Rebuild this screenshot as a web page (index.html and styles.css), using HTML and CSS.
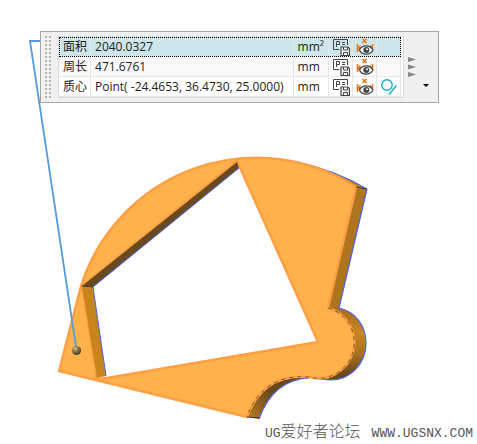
FILE: index.html
```html
<!DOCTYPE html>
<html lang="zh-CN">
<head>
<meta charset="utf-8">
<title>面积测量</title>
<link rel="stylesheet" href="styles.css">
</head>
<body>
<svg class="defs" aria-hidden="true">
  <symbol id="save-parameter" viewBox="0 0 18 18">
    <path d="M7 11.500H1.500V1.500H15.500V7" fill="none" stroke="#464646"/>
    <path d="M4.500 9V3.500H7.500V6.500H4.500M10 4.500H13M10 6.500H13" fill="none" stroke="#464646"/>
    <path d="M9 9H16L17.500 10.500V17.500H9Z" fill="#f5f7f7" stroke="#464646" stroke-width="1.200"/>
    <path d="M11.500 9V12H15.500V9M11.500 17V14.500H15.500V17" fill="none" stroke="#464646"/>
  </symbol>
  <symbol id="show-dimension" viewBox="0 0 18 18">
    <path d="M6.500 1L10.500 5M10.500 1L6.500 5M1.500 6V14M16.500 6V11" fill="none" stroke="#ea7818" stroke-width="1.600"/>
    <path d="M2 10H6M4.500 7.500L2 10L4.500 12.500M12 10H16M14 7.500L16 10" fill="none" stroke="#ea7818" stroke-width="1.300"/>
    <path d="M3.500 12C6 6.500 14 6.500 17 12C14 17.500 6 17.500 3.500 12Z" fill="#f5f7f7" stroke="#464646" stroke-width="1.300"/>
    <circle cx="10.300" cy="12" r="3" fill="#464646"/>
    <circle cx="11" cy="11.300" r="1" fill="#fff"/>
  </symbol>
  <symbol id="tangent" viewBox="0 0 18 18">
    <circle cx="7" cy="7" r="5.200" fill="none" stroke="#1aa7cb" stroke-width="1.400"/>
    <path d="M9 16.500L16.500 7.500" fill="none" stroke="#1aa7cb" stroke-width="1.400"/>
  </symbol>
</svg>

<main class="viewport">
  <svg class="model" viewBox="0 0 477 444" role="img" aria-label="Model">
    <defs>
      <linearGradient id="round-wall" x1="0" y1="308" x2="0" y2="381" gradientUnits="userSpaceOnUse">
        <stop offset="0" stop-color="#a66e1d"/><stop offset=".35" stop-color="#ca861f"/>
        <stop offset=".65" stop-color="#a66e1d"/><stop offset=".9" stop-color="#68491e"/>
      </linearGradient>
      <linearGradient id="fillet-wall" x1="252" y1="418" x2="292" y2="376" gradientUnits="userSpaceOnUse">
        <stop offset="0" stop-color="#b0761e"/><stop offset=".55" stop-color="#68491e"/><stop offset="1" stop-color="#68491e"/>
      </linearGradient>
      <radialGradient id="ball" cx=".35" cy=".3" r=".7">
        <stop offset="0" stop-color="#d0bf86"/><stop offset=".5" stop-color="#85734a"/><stop offset="1" stop-color="#453b25"/>
      </radialGradient>
    </defs>
    <path d="M297 162Q335 170 367 189L356 189L297 164Z" fill="#bd7e20"/>
    <path d="M356 187L367 189L339 308H328Z" fill="#ae741e"/>
    <path d="M328 308H339C354 311 366 325 366 343C366 364 350 380 331 380L315 378Z" fill="url(#round-wall)"/>
    <path d="M247 417L259 419Q273 380 309 378L300 373L260 385Z" fill="url(#fillet-wall)"/>
    <path d="M297 162Q335 170 367 189L339 308C354 311 366 325 366 343C366 364 350 380 331 380L318 379M309 378Q273 380 259 419" fill="none" stroke="#4862f0" stroke-width="1.200"/>
    <path d="M59 371L81 286A184 184 0 0 1 356 187L328 308A35 35 0 0 1 309 377C274 374 256 392 247 417ZM237 161L82 286L97 379L107 378L318 342Z" fill="#ffb24c" fill-rule="evenodd" stroke="#ff9e43" stroke-width="2.400" stroke-linejoin="round"/>
    <path d="M82 286L237 162L239 168L93 287Z" fill="#69491e"/>
    <path d="M82 286L93 287L106 376L97 378Z" fill="#c8841d"/>
    <path d="M239 168L93 287L106 376" fill="none" stroke="#4862f0"/>
    <path d="M82 286L93 287M356 187L366 189M247 417L259 418" fill="none" stroke="#3d3a31"/>
    <path d="M328 308A35 35 0 0 1 309 377C274 374 256 392 247 417" fill="none" stroke="#60481f" stroke-width=".800" stroke-dasharray="4 4"/>
    <path d="M42 41H30L76 347" fill="none" stroke="#559add" stroke-width="1.800"/>
    <circle cx="76.500" cy="350.500" r="4.600" fill="url(#ball)"/>
  </svg>

  <section class="panel" aria-label="测量结果">
    <div class="grip"></div>
    <table class="results">
      <tbody>
        <tr class="selected">
          <th scope="row">面积</th><td class="value">2040.0327</td><td class="unit">mm²</td>
          <td class="tool"><button aria-label="保存参数"><svg><use href="#save-parameter"/></svg></button></td>
          <td class="tool"><button aria-label="显示尺寸"><svg><use href="#show-dimension"/></svg></button></td>
          <td class="tool"></td>
        </tr>
        <tr>
          <th scope="row">周长</th><td class="value">471.6761</td><td class="unit">mm</td>
          <td class="tool"><button aria-label="保存参数"><svg><use href="#save-parameter"/></svg></button></td>
          <td class="tool"><button aria-label="显示尺寸"><svg><use href="#show-dimension"/></svg></button></td>
          <td class="tool"></td>
        </tr>
        <tr>
          <th scope="row">质心</th><td class="value">Point( -24.4653, 36.4730, 25.0000)</td><td class="unit">mm</td>
          <td class="tool"><button aria-label="保存参数"><svg><use href="#save-parameter"/></svg></button></td>
          <td class="tool"><button aria-label="显示尺寸"><svg><use href="#show-dimension"/></svg></button></td>
          <td class="tool"><button aria-label="相切"><svg><use href="#tangent"/></svg></button></td>
        </tr>
      </tbody>
    </table>
    <div class="side">
      <button class="expand" aria-label="展开">
        <svg viewBox="0 0 8 20"><path d="M0 0L8 2.500L0 5ZM0 7.500L8 10L0 12.500ZM0 15L8 17.500L0 20Z" fill="#858585"/></svg>
      </button>
      <button class="more" aria-label="更多"><svg viewBox="0 0 6 3"><path d="M0 0H6L3 3Z"/></svg></button>
    </div>
  </section>

  <p class="watermark"><span>UG</span><span class="forum">爱好者论坛</span><span class="site">WWW.UGSNX.COM</span></p>
</main>
</body>
</html>
```
FILE: styles.css
```css
* {
  box-sizing: border-box;
}

body {
  margin: 0;
  background: #fff;
  color: #222;
  font: 12px/16px "Open Sans", "Noto Sans CJK SC", sans-serif;
}

.defs {
  position: absolute;
  width: 0;
  height: 0;
}

.viewport {
  position: relative;
}

.model {
  display: block;
  width: 100%;
  height: auto;
}

.panel {
  position: absolute;
  top: 31px;
  left: 40px;
  display: flex;
  padding: 4px 2px;
  border: 1px solid #a6a6a6;
  background: #f0f0f0;
}

.grip {
  width: 8px;
  margin-right: 7px;
  background: conic-gradient(#b4b4b4 25%, transparent 0) 0 0 / 4px 4px;
}

.results {
  padding-right: 2px;
  border: 1px solid #dcdcdc;
  border-collapse: separate;
  border-spacing: 0;
  background: #fff;
}

.results th,
.results td {
  height: 20px;
  padding: 0 3px;
  border-right: 1px solid #e6e6e6;
  border-bottom: 1px solid #e6e6e6;
  font-weight: 400;
  text-align: left;
  white-space: nowrap;
}

.results th {
  padding-left: 4px;
}

.results .value {
  padding: 0 9px 0 4px;
}

.results .unit {
  padding: 0 4px;
}

.results .tool {
  width: 24px;
  padding: 0 2px 0 3px;
}

.results tr:nth-child(2) {
  background: #fafafa;
}

.results .selected {
  background: #cde6eb;
  outline: 1px dotted #000;
  outline-offset: -1px;
}

button {
  display: block;
  padding: 0;
  border: 0;
  background: none;
}

button svg {
  display: block;
}

.tool svg {
  width: 18px;
  height: 18px;
}

.side {
  display: flex;
  width: 32px;
  align-items: center;
  justify-content: space-between;
  padding: 0 7px 0 4px;
}

.expand svg {
  width: 8px;
  height: 20px;
}

.more {
  align-self: flex-end;
  padding-bottom: 11px;
}

.more svg {
  width: 6px;
  height: 3px;
}

.watermark {
  position: absolute;
  right: 4px;
  bottom: 0;
  display: flex;
  align-items: baseline;
  margin: 0;
  color: #555;
  font: 13px/20px "Liberation Mono", monospace;
}

.forum {
  font: 300 16px/20px "Noto Sans CJK SC", sans-serif;
}

.site {
  margin-left: 11px;
}
```
